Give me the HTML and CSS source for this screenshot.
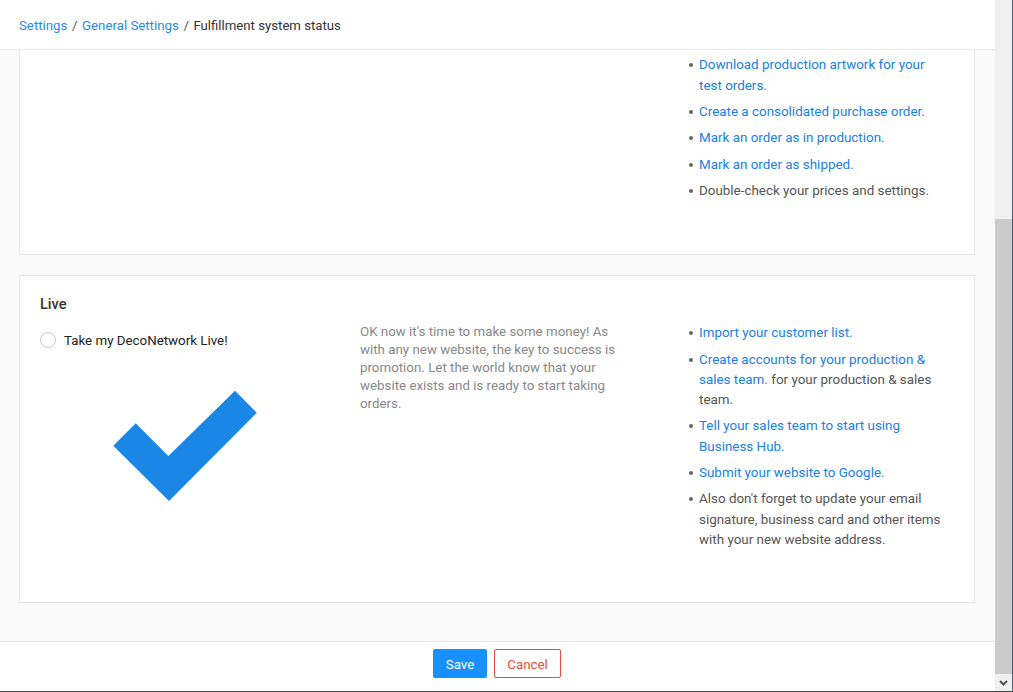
FILE: index.html
```html
<!DOCTYPE html>
<html lang="en">
<head>
<meta charset="utf-8">
<title>Fulfillment system status</title>
<link rel="stylesheet" href="styles.css">
</head>
<body>
<div class="window">
  <div class="app">
    <header class="topbar">
      <nav class="crumbs">
        <a href="#">Settings</a><span class="sep">/</span><a href="#">General Settings</a><span class="sep">/</span><span class="current">Fulfillment system status</span>
      </nav>
    </header>
    <main class="content">
      <section class="card card-clipped">
        <div class="col col-blank"></div>
        <div class="col col-blank"></div>
        <ul class="steps">
          <li><a href="#">Download production artwork for your test orders.</a></li>
          <li><a href="#">Create a consolidated purchase order.</a></li>
          <li><a href="#">Mark an order as in production.</a></li>
          <li><a href="#">Mark an order as shipped.</a></li>
          <li>Double-check your prices and settings.</li>
        </ul>
      </section>
      <section class="card card-live">
        <div class="col">
          <h2 class="card-title">Live</h2>
          <label class="radio"><span class="radio-dot"></span><span>Take my DecoNetwork Live!</span></label>
          <svg class="check" width="144" height="112" viewBox="0 0 144 112" aria-hidden="true">
            <polygon points="122,0.7 143.7,22.7 56,111 0.3,55.7 22.7,33.3 55.3,66"/>
          </svg>
        </div>
        <div class="col">
          <p class="intro">OK now it's time to make some money! As with any new website, the key to success is promotion. Let the world know that your website exists and is ready to start taking orders.</p>
        </div>
        <ul class="steps steps-live">
          <li><a href="#">Import your customer list.</a></li>
          <li><a href="#">Create accounts for your production &amp; sales team.</a> for your production &amp; sales team.</li>
          <li><a href="#">Tell your sales team to start using Business Hub.</a></li>
          <li><a href="#">Submit your website to Google.</a></li>
          <li>Also don't forget to update your email signature, business card and other items with your new website address.</li>
        </ul>
      </section>
    </main>
    <footer class="actions">
      <button class="btn btn-save" type="button">Save</button>
      <button class="btn btn-cancel" type="button">Cancel</button>
    </footer>
  </div>
  <div class="scrollbar">
    <div class="track"></div>
    <div class="thumb"></div>
    <div class="arrow">
      <svg width="9" height="6" viewBox="0 0 9 6" aria-hidden="true"><path d="M1 1l3.5 3.5L8 1" fill="none" stroke="#505050" stroke-width="2"/></svg>
    </div>
  </div>
</div>
</body>
</html>
```
FILE: styles.css
```css
* { box-sizing: border-box; }
html, body { margin: 0; height: 100%; overflow: hidden; }
body {
  font-family: Roboto, "Liberation Sans", sans-serif;
  font-size: 13.33px;
  color: #333;
  background: #fff;
}
a { color: #1a80e6; text-decoration: none; }

.window {
  display: flex;
  height: 692px;
  width: 1013px;
  border-right: 1px solid #4a5f80;
  border-bottom: 1px solid #444;
}
.app {
  flex: 1;
  min-width: 0;
  display: flex;
  flex-direction: column;
}

.topbar {
  height: 50px;
  flex: none;
  display: flex;
  align-items: center;
  padding: 3px 19px 0;
  border-bottom: 1px solid #ebebeb;
  background: #fff;
}
.crumbs { line-height: 20px; font-size: 13.25px; }
.crumbs a { color: #1f8ceb; }
.sep { margin: 0 4.6px; color: #555; }
.current { color: #333; font-size: 13.2px; }

.content {
  flex: 1;
  min-height: 0;
  overflow: hidden;
  background: #fafafa;
  padding: 0 20px 0 19px;
}
.card {
  display: grid;
  grid-template-columns: 320px 320px 1fr;
  background: #fff;
  border: 1px solid #e5e5e5;
  padding: 0 20px;
}
.card-clipped {
  height: 205px;
  border-top: 0;
  padding-top: 5.4px;
}
.card-live {
  height: 328px;
  margin-top: 20px;
  padding-top: 19px;
}

.card-title {
  margin: 0 0 16px;
  font-size: 14.5px;
  line-height: 20px;
  font-weight: 500;
  color: #333;
}
.radio {
  display: flex;
  align-items: center;
  gap: 8px;
  height: 18px;
  color: #222;
}
.radio-dot {
  width: 16px;
  height: 16px;
  border: 1px solid #ccc;
  border-radius: 50%;
  background: #fff;
}
.check {
  display: block;
  margin: 41px 0 0 73px;
}
.check polygon { fill: #1a86e5; }

.intro {
  margin: 28px 0 0;
  width: 265px;
  line-height: 18.1px;
  color: #888;
}

.steps {
  list-style: none;
  margin: 0;
  padding: 0 8px 0 19px;
  font-size: 13.42px;
  line-height: 20.3px;
  color: #555;
}
.steps li { position: relative; margin-bottom: 6px; }
.steps li::before {
  content: "";
  position: absolute;
  left: -10px;
  top: 8px;
  width: 4px;
  height: 4px;
  border-radius: 50%;
  background: #666;
}
.steps-live { padding-top: 28.3px; }

.actions {
  height: 50px;
  flex: none;
  display: flex;
  justify-content: center;
  align-items: flex-start;
  gap: 7px;
  padding: 7px 1px 0 0;
  border-top: 1px solid #e8e8e8;
  background: #fff;
}
.btn {
  height: 29px;
  padding: 1px 0 0;
  font: inherit;
  border-radius: 2px;
  background: #fff;
}
.btn-save {
  width: 54px;
  border: 0;
  background: #1890ff;
  color: #fff;
}
.btn-cancel {
  width: 67px;
  border: 1px solid #e74c3c;
  color: #e74c3c;
}

.scrollbar {
  width: 17px;
  flex: none;
  display: flex;
  flex-direction: column;
  background: #f0f0f0;
}
.track { height: 219px; flex: none; background: #f0f0f0; }
.thumb { flex: 1; background: #cbcbcb; }
.arrow {
  height: 17px;
  flex: none;
  display: flex;
  align-items: center;
  justify-content: center;
  background: #f0f0f0;
}
```
